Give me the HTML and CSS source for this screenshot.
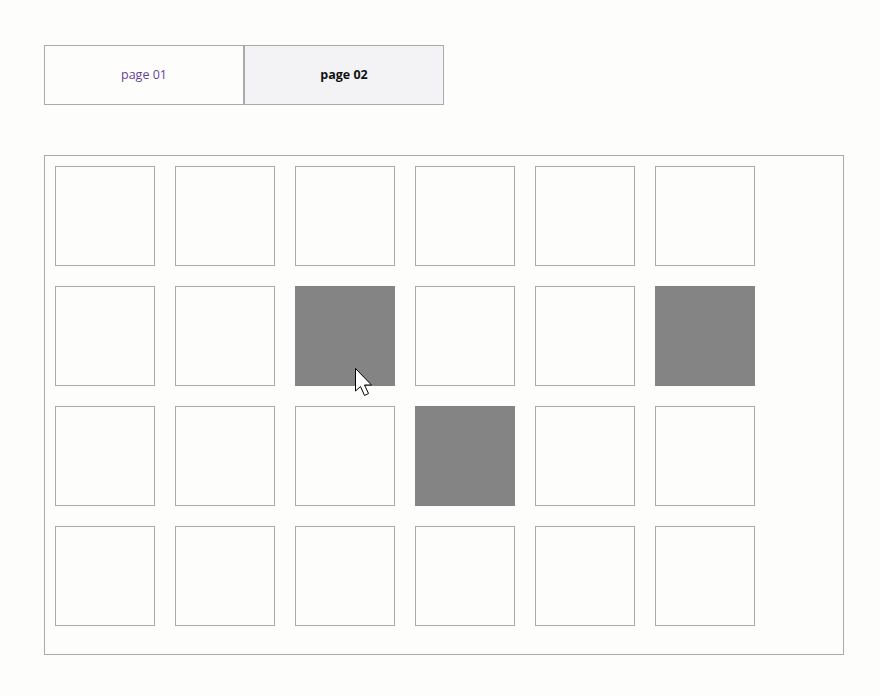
FILE: index.html
```html
<!DOCTYPE html>
<html>
<head>
<meta charset="utf-8">
<link rel="stylesheet" href="styles.css">
</head>
<body>
<div class="page">
  <div class="tabs">
    <a class="tab tab-link" href="#p1">page 01</a>
    <div class="tab tab-active">page 02</div>
  </div>
  <div class="board">
    <div class="grid">
      <div class="cell"></div><div class="cell"></div><div class="cell"></div><div class="cell"></div><div class="cell"></div><div class="cell"></div>
      <div class="cell"></div><div class="cell"></div>
      <div class="cell filled">
        <svg class="cursor" width="20" height="30" viewBox="0 0 20 30">
          <path d="M0.5 0.5 L0.5 23 L5.5 18.5 L9.5 27.5 L13.5 25.5 L9.5 17 L16.5 17 Z" fill="#fff" stroke="#000" stroke-width="1" stroke-linejoin="miter"/>
        </svg>
      </div>
      <div class="cell"></div><div class="cell"></div><div class="cell filled"></div>
      <div class="cell"></div><div class="cell"></div><div class="cell"></div><div class="cell filled"></div><div class="cell"></div><div class="cell"></div>
      <div class="cell"></div><div class="cell"></div><div class="cell"></div><div class="cell"></div><div class="cell"></div><div class="cell"></div>
    </div>
  </div>
</div>
</body>
</html>
```
FILE: styles.css
```css
html, body {
  margin: 0;
  padding: 0;
  background: #fdfdfc;
}
.page {
  padding: 45px 0 0 44px;
  font-family: "Open Sans", "Noto Sans", sans-serif;
}
.tabs {
  display: flex;
  width: 400px;
}
.tab {
  box-sizing: border-box;
  width: 200px;
  height: 60px;
  border: 1px solid #aaaaaa;
  display: flex;
  align-items: center;
  justify-content: center;
  font-size: 12.5px;
  padding-bottom: 1px;
  text-decoration: none;
}
.tab-link {
  color: #6a3d9a;
  background: #fdfdfc;
}
.tab-active {
  color: #111;
  font-weight: 700;
  background: #f3f3f5;
}
.board {
  box-sizing: border-box;
  margin-top: 50px;
  width: 800px;
  height: 500px;
  border: 1px solid #aaaaaa;
  padding: 10px;
}
.grid {
  display: grid;
  grid-template-columns: repeat(6, 100px);
  grid-auto-rows: 100px;
  gap: 20px;
}
.cell {
  box-sizing: border-box;
  border: 1px solid #aaaaaa;
  background: #fdfdfc;
  position: relative;
}
.cell.filled {
  background: #848484;
  border-color: #848484;
}
.cursor {
  position: absolute;
  left: 59px;
  top: 81px;
}
```
